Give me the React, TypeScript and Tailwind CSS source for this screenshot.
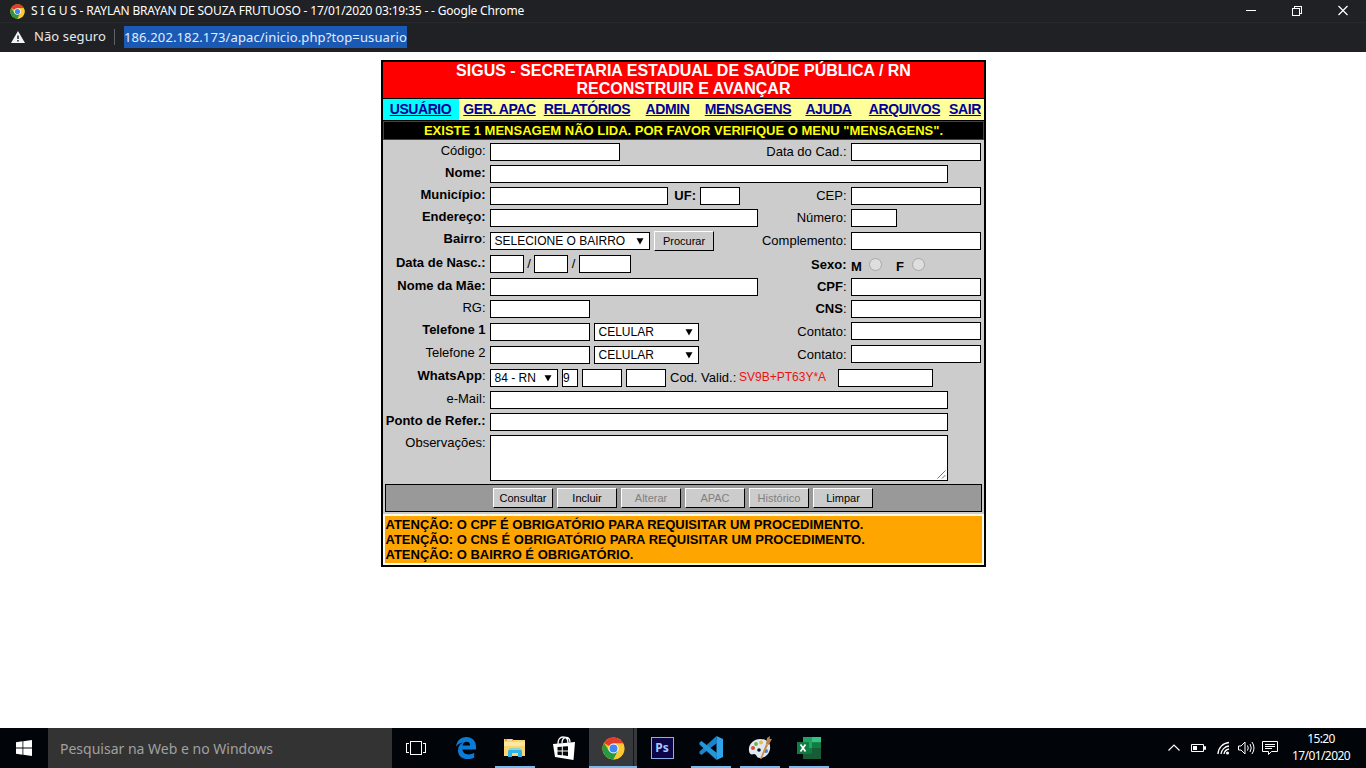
import type { ReactNode } from "react";

function Box({ className = "", value }: { className?: string; value?: string }) {
  return (
    <input
      className={`h-[18px] shrink-0 border border-black bg-white p-0 pb-px text-[12px] leading-[15px] text-black ${className}`}
      defaultValue={value}
    />
  );
}

function Drop({ className = "", text }: { className?: string; text: string }) {
  return (
    <button className={`flex h-[18px] shrink-0 items-center justify-between border border-black bg-white pr-[5px] pl-[3.5px] text-[12px] leading-4 whitespace-nowrap ${className}`}>
      <span>{text}</span>
      <svg width="8" height="7" viewBox="0 0 8 7"><path d="M0.5 0.3h7L4 6.5z" fill="#000" /></svg>
    </button>
  );
}

function Btn({ text, off = false, className = "" }: { text: string; off?: boolean; className?: string }) {
  return (
    <button
      className={`h-5 w-[60px] shrink-0 border border-t-white border-l-white border-r-black border-b-black bg-[#cccccc] text-[11px] leading-[18px] ${off ? "text-[#808080]" : "text-black"} ${className}`}
    >
      {text}
    </button>
  );
}

function Row({
  h, label, labelClass = "pt-[2px]", left, leftClass = "pt-[2px]", right, rightLabel, rightLabelClass = "pt-[3px]", rightClass = "pt-[2px]",
}: {
  h: string; label: ReactNode; labelClass?: string; left: ReactNode; leftClass?: string;
  right?: ReactNode; rightLabel?: ReactNode; rightLabelClass?: string; rightClass?: string;
}) {
  return (
    <div className={`flex items-start ${h}`}>
      <div className={`flex w-[102.5px] shrink-0 justify-end leading-[15px] whitespace-nowrap ${labelClass}`}>{label}</div>
      <div className={`ml-[4.5px] flex shrink-0 ${leftClass}`}>{left}</div>
      {right && (
        <div className="ml-auto flex w-[226px] shrink-0">
          <div className={`flex w-[88.5px] shrink-0 justify-end leading-[15px] whitespace-nowrap ${rightLabelClass}`}>{rightLabel}</div>
          <div className={`ml-[4.5px] flex ${rightClass}`}>{right}</div>
        </div>
      )}
    </div>
  );
}

function Radio() {
  return <span className="-mt-px size-[13px] rounded-full border border-[#a8a8a8] bg-[#dedede]" />;
}

function ChromeIcon({ size }: { size: number }) {
  return (
    <svg width={size} height={size} viewBox="0 0 48 48">
      <circle cx="24" cy="24" r="23" fill="#fbc116" />
      <path d="M24 24L4.1 12.5A23 23 0 0 1 43.9 12.5L44 13.5H24z" fill="#e33b2e" />
      <path d="M4.1 12.5A23 23 0 0 0 24 47L33.1 29.3 24 24 14.9 29.3z" fill="#269a43" />
      <path d="M24 13.5H43.9A23 23 0 0 1 24 47L33.1 29.3z" fill="#fcc934" />
      <circle cx="24" cy="24" r="10.6" fill="#fff" />
      <circle cx="24" cy="24" r="8.4" fill="#4285f4" />
    </svg>
  );
}

function Task({ children, open = false, active = false }: { children: ReactNode; open?: boolean; active?: boolean }) {
  return (
    <div className={`relative mr-px flex h-10 w-12 shrink-0 items-center justify-center ${active ? "bg-[#36383c]" : ""}`}>
      {children}
      {open && <span className={`absolute bottom-0 h-0.5 bg-[#76b9ed] ${active ? "w-12" : "w-10"}`} />}
      {active && <span className="absolute top-0 right-[3px] h-[38px] w-px bg-[#15171a]" />}
    </div>
  );
}

const menu = [
  { t: "USUÁRIO", c: "w-[75px] mr-px" },
  { t: "GER. APAC", c: "w-[81px]" },
  { t: "RELATÓRIOS", c: "w-[94px]" },
  { t: "ADMIN", c: "w-[67px]" },
  { t: "MENSAGENS", c: "w-[94px]" },
  { t: "AJUDA", c: "w-[67px]" },
  { t: "ARQUIVOS", c: "w-[85px]" },
  { t: "SAIR", c: "w-[36px]" },
];

export default function App() {
  return (
    <div className="flex h-[768px] w-[1366px] flex-col overflow-hidden bg-white font-['Liberation_Sans',sans-serif] text-[13px] text-black">
      <header className="h-[52px] bg-[#202124] font-['Noto_Sans',sans-serif] text-white">
        <div className="flex h-[23px] items-center border-b border-[#28292c] pl-[10px]">
          <ChromeIcon size={15} />
          <span className="ml-[6px] text-[12px] tracking-[-0.174px] whitespace-pre">S I G U S - RAYLAN BRAYAN DE SOUZA FRUTUOSO - 17/01/2020 03:19:35 - - Google Chrome</span>
          <div className="mr-[18px] ml-auto flex items-center">
            <svg width="102" height="12" viewBox="0 0 102 12" fill="none" stroke="#fff" shapeRendering="crispEdges">
              <path d="M0 5.5h10M46.5 3.5h7v7h-7zM48.5 3.5v-2h7v7h-2" />
              <path d="M92.5 1l9 9M101.5 1l-9 9" shapeRendering="auto" strokeWidth="1.2" />
            </svg>
          </div>
        </div>
        <div className="flex h-7 items-center pl-[11px] text-[13px]">
          <svg width="14" height="12" viewBox="0 0 14 13" preserveAspectRatio="none"><path d="M7 0l7 13H0z" fill="#f1f3f4" /><path d="M7 5v3.7M7 9.8v1.5" stroke="#202124" strokeWidth="1.5" /></svg>
          <span className="ml-[9px] tracking-[0.1px] text-[#e8eaed]">Não seguro</span>
          <i className="ml-2 h-4 w-px bg-[#5f6368]" />
          <span className="ml-[9px] h-[22px] bg-[#1b5ab4] leading-[22px] tracking-[0.123px] text-[#e3edff]">186.202.182.173/apac/inicio.php?top=usuario</span>
        </div>
      </header>

      <main className="flex flex-1 flex-col pt-2">
        <div className="ml-[381px] flex h-[507px] w-[605px] flex-col border-2 border-black bg-[#cccccc]">
          <div className="flex h-[37px] flex-col items-center border-b border-black bg-[#ff0000] text-[16px] leading-[18px] font-bold whitespace-nowrap text-white">
            <span>SIGUS - SECRETARIA ESTADUAL DE SAÚDE PÚBLICA / RN</span>
            <span>RECONSTRUIR E AVANÇAR</span>
          </div>
          <nav className="flex h-[22px] border-b border-black bg-[#ffff99] text-[14px] leading-[21px] font-bold tracking-[-0.42px] text-[#000099]">
            {menu.map((m, i) => (
              <a key={m.t} className={`flex justify-center whitespace-nowrap underline ${m.c} ${i === 0 ? "bg-[#00ffff] shadow-[1px_0_0_#00ffff]" : ""}`}>{m.t}</a>
            ))}
          </nav>
          <div className="flex h-[19px] items-center justify-center border border-[#b01414] bg-black text-[13px] font-bold whitespace-nowrap text-[#ffff00]">
            EXISTE 1 MENSAGEM NÃO LIDA. POR FAVOR VERIFIQUE O MENU "MENSAGENS".
          </div>

          <div className="flex flex-col pt-px">
            <Row h="h-[22px]" label="Código:" left={<Box className="w-[130px]" />} rightLabel="Data do Cad.:" right={<Box className="w-[130px]" />} />
            <Row h="h-[22px]" label={<b>Nome:</b>} left={<Box className="w-[458px]" />} />
            <Row h="h-[22px]" label={<b>Município:</b>}
              left={<><Box className="w-[178px]" /><b className="w-8 pr-1 text-right leading-[17px]">UF:</b><Box className="w-10" /></>}
              rightLabel="CEP:" right={<Box className="w-[130px]" />} />
            <Row h="h-[23px]" label={<b>Endereço:</b>} left={<Box className="w-[268px]" />} rightLabel="Número:" right={<Box className="w-[46px]" />} />
            <Row h="h-[23px]" labelClass="pt-px" leftClass="pt-px" label={<><b>Bairro</b>:</>}
              left={<><Drop className="mt-px w-40" text="SELECIONE O BAIRRO" /><Btn className="ml-1" text="Procurar" /></>}
              rightLabel="Complemento:" right={<Box className="w-[130px]" />} />
            <Row h="h-[23px]" label={<b>Data de Nasc.:</b>}
              left={<><Box className="w-[34px]" /><span className="w-[10px] text-center leading-[17px]">/</span><Box className="w-[34px]" /><span className="w-[11px] text-center leading-[17px]">/</span><Box className="w-[52px]" /></>}
              rightLabelClass="pt-1" rightClass="pt-[6px] leading-[15px] font-bold" rightLabel={<b>Sexo:</b>}
              right={<><span className="mr-[6px] w-[12px]">M</span><Radio /><span className="mr-[6px] ml-[14px] w-[10px]">F</span><Radio /></>} />
            <Row h="h-[22px]" label={<b>Nome da Mãe:</b>} left={<Box className="w-[268px]" />} rightLabel={<><b>CPF</b>:</>} right={<Box className="w-[130px]" />} />
            <Row h="h-[22px]" label="RG:" left={<Box className="w-[100px]" />} rightLabel={<><b>CNS</b>:</>} right={<Box className="w-[130px]" />} />
            <Row h="h-[23px]" leftClass="pt-[3px]" label={<b>Telefone 1</b>}
              left={<><Box className="w-[100px]" /><Drop className="ml-1 w-[105px]" text="CELULAR" /></>} rightLabel="Contato:" rightLabelClass="pt-[4px]" right={<Box className="w-[130px]" />} />
            <Row h="h-[24px]" leftClass="pt-[3px]" label="Telefone 2"
              left={<><Box className="w-[100px]" /><Drop className="ml-1 w-[105px]" text="CELULAR" /></>} rightLabel="Contato:" rightLabelClass="pt-[4px]" right={<Box className="w-[130px]" />} />
            <Row h="h-[22px]" labelClass="pt-px" label={<><b>WhatsApp</b>:</>}
              left={<><Drop className="w-[68px]" text="84 - RN" /><Box className="ml-1 w-4" value="9" /><Box className="ml-1 w-10" /><Box className="ml-1 w-10" />
                <span className="ml-1 w-[66px] leading-[17px] whitespace-nowrap">Cod. Valid.:</span><span className="ml-[3px] w-[99px] text-[12px] leading-[17px] text-[#ee1111]">SV9B+PT63Y*A</span><Box className="w-[95px]" /></>} />
            <Row h="h-[22px]" label="e-Mail:" left={<Box className="w-[458px]" />} />
            <Row h="h-[22px]" label={<b>Ponto de Refer.:</b>} left={<Box className="w-[458px]" />} />
            <Row h="h-[51px]" label="Observações:" left={
              <div className="flex h-[46px] w-[458px] items-end justify-end border border-black bg-white">
                <svg className="m-px" width="9" height="9" viewBox="0 0 9 9"><path d="M0.5 8.5l8-8M5 8.5L8.5 5" stroke="#777" /></svg>
              </div>} />
          </div>

          <div className="mx-0.5 flex h-7 shrink-0 gap-1 border border-black bg-[#999999] pt-[3px] pl-[107px]">
            <Btn text="Consultar" /><Btn text="Incluir" /><Btn text="Alterar" off /><Btn text="APAC" off /><Btn text="Histórico" off /><Btn text="Limpar" />
          </div>
          <div className="mt-0.5 flex flex-1 flex-col items-start border-2 border-[#fdfbe8] bg-[#ffa500] pt-px pl-[0.5px] text-[13px] leading-[15px] font-bold whitespace-nowrap">
            <span>ATENÇÃO: O CPF É OBRIGATÓRIO PARA REQUISITAR UM PROCEDIMENTO.</span>
            <span>ATENÇÃO: O CNS É OBRIGATÓRIO PARA REQUISITAR UM PROCEDIMENTO.</span>
            <span>ATENÇÃO: O BAIRRO É OBRIGATÓRIO.</span>
          </div>
        </div>
      </main>

      <footer className="flex h-10 items-center bg-[#010408] font-['Noto_Sans',sans-serif] text-white">
        <div className="flex w-12 justify-center">
          <svg width="16" height="16" viewBox="0 0 16 16" fill="#fff"><path d="M0 2.2L6.5 1.3V7.5H0zM7.3 1.2L16 0v7.5H7.3zM0 8.4h6.5v6.3L0 13.8zM7.3 8.4H16V16l-8.7-1.2z" /></svg>
        </div>
        <div className="flex h-10 w-[344px] items-center bg-[#333333] pl-3 text-[14px] text-[#a0a0a0]">Pesquisar na Web e no Windows</div>
        <div className="mr-0.5 flex w-12 justify-center">
          <svg width="20" height="14" viewBox="0 0 20 14" fill="none" stroke="#fff" shapeRendering="crispEdges"><path d="M4.5 .5h11v13h-11zM3 2.5H.5v9H3M17 2.5h2.5v9H17" /></svg>
        </div>
        <Task>
          <svg width="20" height="22" viewBox="0 0 20 22"><path d="M0 9.6C.8 3.500 4.800 0 10.300 0 16.500 0 20 4.400 20 9.800v2.700H6.500c.2 3.200 2.800 4.900 6 4.900 2.100 0 4-.6 5.700-1.600v4.600c-1.900 1-4 1.600-6.500 1.600-6 0-9.700-3.400-9.700-8.600C2 9.800 4 7 7.200 5.600 4.300 5.900 1.800 7.300 0 9.600zM6.600 8.600h7.500c0-2.500-1.200-3.900-3.400-3.900-2.300 0-3.700 1.500-4.100 3.900z" fill="#0b7bd8" /></svg>
        </Task>
        <Task open>
          <svg width="22" height="20" viewBox="0 0 22 20"><path d="M0 1h8l1.500 1H21v16H0z" fill="#f7d673" /><path d="M1 1h8v2H1z" fill="#e8a93a" /><path d="M3 1.500h5v1H3z" fill="#fff" /><path d="M0 4h21v4H0z" fill="#fde79a" /><path d="M4 19v-6l2-2.500h10L18 13v6h-4v-4H8v4z" fill="#2fb4e8" /><path d="M6 10.500h10l1 1.500H5z" fill="#7fdcf5" /></svg>
        </Task>
        <Task>
          <svg width="22" height="24" viewBox="0 0 22 24"><path d="M0 8l22-2-1.500 18L2 21z" fill="#fff" /><path d="M5 8C5 3 7 1 10 1s5 2 5 6M9 7c0-4 2-5.500 4-5.500S17 3 17 6.500" fill="none" stroke="#fff" strokeWidth="1.300" /><path d="M4.500 11l4.300-.3v3.800H4.500zM9.800 10.600l5.200-.4v4.300H9.800zM4.500 15.500h4.300v3.700l-4.300-.5zM9.800 15.500H15V20l-5.200-.7z" fill="#05070b" /></svg>
        </Task>
        <Task open active><ChromeIcon size={23} /></Task>
        <Task>
          <div className="flex h-[22px] w-[23px] items-center justify-center border-[1.5px] border-[#8fb0e8] bg-[#0a0648] text-[12px] font-bold text-[#a9c8ff]">Ps</div>
        </Task>
        <Task open>
          <svg width="24" height="24" viewBox="0 0 24 24"><path d="M17.500 0L24 3v18l-6.500 3z" fill="#2ea3e8" /><path d="M17.500 0L0.500 15.500v2L2.500 19 18 7z" fill="#1b83c9" /><path d="M17.500 24L0.500 8.500v-2L2.500 5 18 17z" fill="#2396dc" /></svg>
        </Task>
        <Task open>
          <svg width="25" height="24" viewBox="0 0 25 24"><path d="M1 15C0 8 6 3 12 3c7 0 11 4 10 10-.7 5-5 9-10 9-4 0-3-4-6-4-3 1-4.500 0-5-3z" fill="#dfe9f2" /><circle cx="5" cy="12" r="2" fill="#e04a3a" /><circle cx="8" cy="8" r="1.900" fill="#66b64a" /><circle cx="13" cy="6.500" r="1.900" fill="#f0b93a" /><circle cx="18" cy="15" r="2" fill="#4b7fd0" /><circle cx="11" cy="14" r="1.800" fill="#10151c" /><path d="M12 23l6-15 2 1-6.500 14z" fill="#d08a3c" /><path d="M18 8l1-6 3-2-.3 3L24 3l-3.500 6z" fill="#b9824c" /></svg>
        </Task>
        <Task open>
          <svg width="24" height="22" viewBox="0 0 24 22"><path d="M6 0h18v22H6z" fill="#185c37" /><path d="M6 0h9v11H6z" fill="#21a366" /><path d="M15 0h9v5.500h-9z" fill="#33c481" /><path d="M15 5.500h9V11h-9zM6 11h9v5.500H6z" fill="#107c41" /><path d="M0 5h12v12H0z" fill="#107c41" /><path d="M3.500 7.500l5 7M8.500 7.500l-5 7" stroke="#fff" strokeWidth="1.700" /></svg>
        </Task>
        <div className="ml-auto flex items-center">
          <svg width="114" height="18" viewBox="0 0 114 18" fill="none" stroke="#fff">
            <path d="M1.500 11.500L7 6l5.500 5.500" strokeWidth="1.200" />
            <path d="M24.500 5.500h12v7h-12zM37.500 7.500h1v3h-1z" /><path d="M26 7h4v4h-4z" fill="#fff" stroke="none" />
            <path d="M51 15A12 12 0 0 1 62 3.500M54 15a9 9 0 0 1 8-8M57 15a6 6 0 0 1 5-5" strokeWidth="1.300" /><circle cx="60.500" cy="14" r="1.500" fill="#fff" stroke="none" />
            <path d="M71.500 7h2.500l4-4v12l-4-4h-2.500zM80.500 6.500q1.500 2.500 0 5M83 5q2.500 4 0 8M85 3q4 6 0 12" />
            <path d="M95.500 2.500h15v10h-6l-3 3v-3h-6zM98 5.500h10M98 7.500h10M98 9.500h7" />
          </svg>
          <div className="mr-4 mb-[3px] ml-[11px] flex w-[58px] flex-col items-center text-[12px] leading-[17px] tracking-[-0.6px] whitespace-nowrap"><span>15:20</span><span>17/01/2020</span></div>
        </div>
      </footer>
    </div>
  );
}
